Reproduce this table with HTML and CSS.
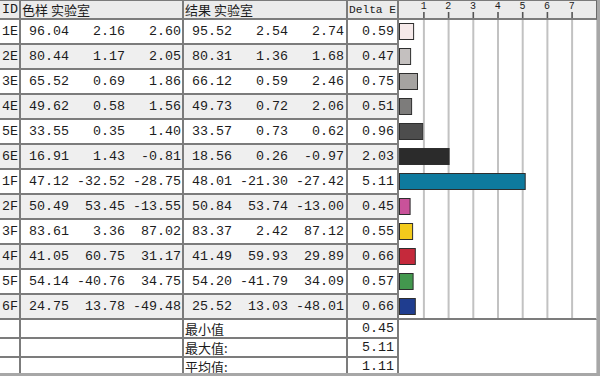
FILE: index.html
```html
<!DOCTYPE html>
<html lang="zh">
<head>
<meta charset="utf-8">
<title>Delta E</title>
<link rel="stylesheet" href="styles.css">
</head>
<body>
<div class="table">
  <div class="row head">
    <div class="c id">ID</div>
    <div class="c lab">色样 实验室</div>
    <div class="c lab">结果 实验室</div>
    <div class="c dh">Delta E</div>
    <div class="axis">
      <div class="labels"><span>1</span><span>2</span><span>3</span><span>4</span><span>5</span><span>6</span><span>7</span></div>
      <svg class="ticks" width="197" height="7" viewBox="0 0 197 7">
        <g stroke="#555555" stroke-width="1.6">
          <line x1="24.9" y1="0" x2="24.9" y2="7"/>
          <line x1="49.6" y1="0" x2="49.6" y2="7"/>
          <line x1="74.3" y1="0" x2="74.3" y2="7"/>
          <line x1="99" y1="0" x2="99" y2="7"/>
          <line x1="123.7" y1="0" x2="123.7" y2="7"/>
          <line x1="148.4" y1="0" x2="148.4" y2="7"/>
          <line x1="173.1" y1="0" x2="173.1" y2="7"/>
        </g>
      </svg>
    </div>
  </div>

  <div class="row">
    <div class="c id">1E</div>
    <div class="c nums"><span class="n1">96.04</span><span class="n2">2.16</span><span class="n2">2.60</span></div>
    <div class="c nums"><span class="n1">95.52</span><span class="n2">2.54</span><span class="n2">2.74</span></div>
    <div class="c de">0.59</div>
  </div>
  <div class="row alt">
    <div class="c id">2E</div>
    <div class="c nums"><span class="n1">80.44</span><span class="n2">1.17</span><span class="n2">2.05</span></div>
    <div class="c nums"><span class="n1">80.31</span><span class="n2">1.36</span><span class="n2">1.68</span></div>
    <div class="c de">0.47</div>
  </div>
  <div class="row">
    <div class="c id">3E</div>
    <div class="c nums"><span class="n1">65.52</span><span class="n2">0.69</span><span class="n2">1.86</span></div>
    <div class="c nums"><span class="n1">66.12</span><span class="n2">0.59</span><span class="n2">2.46</span></div>
    <div class="c de">0.75</div>
  </div>
  <div class="row alt">
    <div class="c id">4E</div>
    <div class="c nums"><span class="n1">49.62</span><span class="n2">0.58</span><span class="n2">1.56</span></div>
    <div class="c nums"><span class="n1">49.73</span><span class="n2">0.72</span><span class="n2">2.06</span></div>
    <div class="c de">0.51</div>
  </div>
  <div class="row">
    <div class="c id">5E</div>
    <div class="c nums"><span class="n1">33.55</span><span class="n2">0.35</span><span class="n2">1.40</span></div>
    <div class="c nums"><span class="n1">33.57</span><span class="n2">0.73</span><span class="n2">0.62</span></div>
    <div class="c de">0.96</div>
  </div>
  <div class="row alt">
    <div class="c id">6E</div>
    <div class="c nums"><span class="n1">16.91</span><span class="n2">1.43</span><span class="n2">-0.81</span></div>
    <div class="c nums"><span class="n1">18.56</span><span class="n2">0.26</span><span class="n2">-0.97</span></div>
    <div class="c de">2.03</div>
  </div>
  <div class="row">
    <div class="c id">1F</div>
    <div class="c nums"><span class="n1">47.12</span><span class="n2">-32.52</span><span class="n2">-28.75</span></div>
    <div class="c nums"><span class="n1">48.01</span><span class="n2">-21.30</span><span class="n2">-27.42</span></div>
    <div class="c de">5.11</div>
  </div>
  <div class="row alt">
    <div class="c id">2F</div>
    <div class="c nums"><span class="n1">50.49</span><span class="n2">53.45</span><span class="n2">-13.55</span></div>
    <div class="c nums"><span class="n1">50.84</span><span class="n2">53.74</span><span class="n2">-13.00</span></div>
    <div class="c de">0.45</div>
  </div>
  <div class="row">
    <div class="c id">3F</div>
    <div class="c nums"><span class="n1">83.61</span><span class="n2">3.36</span><span class="n2">87.02</span></div>
    <div class="c nums"><span class="n1">83.37</span><span class="n2">2.42</span><span class="n2">87.12</span></div>
    <div class="c de">0.55</div>
  </div>
  <div class="row alt">
    <div class="c id">4F</div>
    <div class="c nums"><span class="n1">41.05</span><span class="n2">60.75</span><span class="n2">31.17</span></div>
    <div class="c nums"><span class="n1">41.49</span><span class="n2">59.93</span><span class="n2">29.89</span></div>
    <div class="c de">0.66</div>
  </div>
  <div class="row">
    <div class="c id">5F</div>
    <div class="c nums"><span class="n1">54.14</span><span class="n2">-40.76</span><span class="n2">34.75</span></div>
    <div class="c nums"><span class="n1">54.20</span><span class="n2">-41.79</span><span class="n2">34.09</span></div>
    <div class="c de">0.57</div>
  </div>
  <div class="row alt">
    <div class="c id">6F</div>
    <div class="c nums"><span class="n1">24.75</span><span class="n2">13.78</span><span class="n2">-49.48</span></div>
    <div class="c nums"><span class="n1">25.52</span><span class="n2">13.03</span><span class="n2">-48.01</span></div>
    <div class="c de">0.66</div>
  </div>

  <div class="chart">
    <svg width="197" height="298" viewBox="0 0 197 298">
      <g stroke="#c2c2c2" stroke-width="2">
        <line x1="24.9" y1="0" x2="24.9" y2="298"/>
        <line x1="49.6" y1="0" x2="49.6" y2="298"/>
        <line x1="74.3" y1="0" x2="74.3" y2="298"/>
        <line x1="99" y1="0" x2="99" y2="298"/>
        <line x1="123.7" y1="0" x2="123.7" y2="298"/>
        <line x1="148.4" y1="0" x2="148.4" y2="298"/>
        <line x1="173.1" y1="0" x2="173.1" y2="298"/>
      </g>
      <g stroke="#2e2e2e" stroke-width="1">
        <rect x="0.5" y="3.5" width="14.1" height="16" fill="#f6eaea"/>
        <rect x="0.5" y="28.5" width="11.1" height="16" fill="#c4c0bf"/>
        <rect x="0.5" y="53.5" width="18" height="16" fill="#a5a3a1"/>
        <rect x="0.5" y="78.5" width="12.1" height="16" fill="#7d7c7b"/>
        <rect x="0.5" y="103.5" width="23.2" height="16" fill="#4d4d4d"/>
        <rect x="0.5" y="128.5" width="49.6" height="16" fill="#2b2b2b"/>
        <rect x="0.5" y="153.5" width="125.7" height="16" fill="#0e7a9e"/>
        <rect x="0.5" y="178.5" width="10.6" height="16" fill="#c9529a"/>
        <rect x="0.5" y="203.5" width="13.1" height="16" fill="#f3cb1c"/>
        <rect x="0.5" y="228.5" width="15.8" height="16" fill="#c5293b"/>
        <rect x="0.5" y="253.5" width="13.6" height="16" fill="#43984e"/>
        <rect x="0.5" y="278.5" width="15.8" height="16" fill="#1f3d8f"/>
      </g>
    </svg>
  </div>

  <div class="row sum">
    <div class="c id"></div>
    <div class="c"></div>
    <div class="c lab">最小值</div>
    <div class="c de">0.45</div>
  </div>
  <div class="row sum">
    <div class="c id"></div>
    <div class="c"></div>
    <div class="c lab">最大值:</div>
    <div class="c de">5.11</div>
  </div>
  <div class="row sum">
    <div class="c id"></div>
    <div class="c"></div>
    <div class="c lab">平均值:</div>
    <div class="c de">1.11</div>
  </div>
  <div class="blank"></div>
</div>
</body>
</html>
```

FILE: styles.css
```css
html, body {
  margin: 0;
  padding: 0;
}
body {
  width: 600px;
  height: 376px;
  overflow: hidden;
  background: #a7a7a7;
}
.table {
  width: 597px;
  height: 373px;
  overflow: hidden;
  background: #fff;
  font-family: "Liberation Mono", "Courier New", monospace;
  font-size: 13.33px;
  color: #1c1c1c;
  display: grid;
  grid-template-columns: 21px 163px 164px 51px 198px;
  grid-template-rows: 20px repeat(12, 25px) 19px 19px 19px;
}
.row { display: contents; }

.c {
  display: flex;
  align-items: center;
  border-right: 2px solid #7c7c7c;
  border-bottom: 2px solid #7c7c7c;
  white-space: pre;
  overflow: hidden;
}
.head .c {
  border-top: 1px solid #7a7a7a;
  background-color: #ebebeb;
}
.alt .c { background-color: #efefef; }

.id { padding-left: 2px; }
.lab {
  font-family: "Noto Sans CJK SC", "Noto Sans", sans-serif;
  font-size: 13px;
  padding-left: 1px;
}
.dh {
  font-size: 11.2px;
  padding-left: 1px;
}
.de {
  justify-content: flex-end;
  padding-right: 3px;
}
.nums span { text-align: right; }
.n1 { width: 48px; }
.n2 { width: 56px; }

.sum .c {
  align-items: flex-start;
  line-height: 15px;
  padding-top: 1px;
}

/* axis header */
.axis {
  grid-column: 5;
  grid-row: 1;
  display: flex;
  flex-direction: column;
  justify-content: space-between;
  border-top: 1px solid #7a7a7a;
  border-right: 1px solid #6a6a6a;
  border-bottom: 2px solid #7c7c7c;
  background: #ebebeb;
  overflow: hidden;
}
.ticks { display: block; flex: none; }
.labels {
  display: flex;
  padding-left: 12.35px;
  font-size: 10px;
  line-height: 10px;
}
.labels span {
  flex: 0 0 24.7px;
  text-align: center;
  padding-top: 1px;
}

/* chart body */
.chart {
  grid-column: 5;
  grid-row: 2 / 14;
  background: #fff;
  border-right: 1px solid #c9c9c9;
  border-bottom: 2px solid #7c7c7c;
  overflow: hidden;
}
.chart svg { display: block; }

.blank {
  grid-column: 5;
  grid-row: 14 / 17;
  background: #fff;
  border-right: 1px solid #c9c9c9;
}
```
